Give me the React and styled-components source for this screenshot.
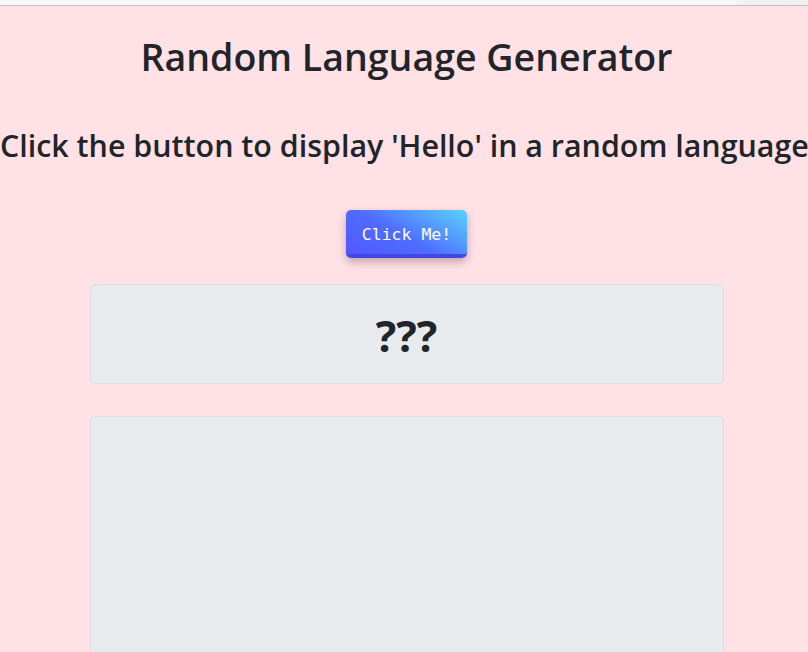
import React from "react";
import styled, { createGlobalStyle } from "styled-components";

const Global = createGlobalStyle`
  html, body { margin: 0; padding: 0; }
  body {
    background: #ffe1e6;
    color: #212529;
    font-family: "Open Sans", "Noto Sans", sans-serif;
    overflow: hidden;
    height: 652px;
  }
`;

const TopStrip = styled.div`
  height: 5px;
  background: linear-gradient(90deg, #f7f7f7 0, #f7f7f7 735px, #efefef 745px, #f0f0f0 100%);
  border-bottom: 1px solid #bfbfbf;
`;

const Page = styled.main`
  width: 813px;
  display: flex;
  flex-direction: column;
  align-items: center;
`;

const Title = styled.h1`
  margin: 28px 0 0;
  font-size: 37.5px;
  font-weight: 600;
  line-height: 45px;
  white-space: nowrap;
`;

const Subtitle = styled.h2`
  align-self: flex-start;
  margin: 49px 0 0;
  font-size: 30.4px;
  font-weight: 600;
  line-height: 36px;
  white-space: nowrap;
`;

const Button = styled.button`
  margin-top: 46px;
  width: 121px;
  height: 48px;
  border: none;
  border-bottom: 4px solid #4349df;
  border-radius: 5px;
  background: linear-gradient(30deg, #5158ff 0%, #4f6dff 45%, #5ad3ff 100%);
  color: #fff;
  font-family: "DejaVu Sans Mono", "Liberation Mono", monospace;
  font-size: 16.5px;
  padding: 4px 0 0;
  box-shadow: 0 4px 8px rgba(80, 50, 70, 0.35);
  cursor: pointer;
`;

const Panel = styled.section`
  box-sizing: border-box;
  width: 634px;
  height: ${(p) => p.$h}px;
  margin-top: ${(p) => p.$mt}px;
  background: #e8ebee;
  border: 1px solid #dcdfe3;
  border-radius: 5px;
  display: flex;
  align-items: center;
  justify-content: center;
`;

const Result = styled.div`
  font-size: 43px;
  font-weight: 700;
  line-height: 1;
  margin-top: 2px;
`;

export default function App() {
  return (
    <>
      <Global />
      <TopStrip />
      <Page>
        <Title>Random Language Generator</Title>
        <Subtitle>Click the button to display 'Hello' in a random language</Subtitle>
        <Button>Click Me!</Button>
        <Panel $h={100} $mt={26}>
          <Result>???</Result>
        </Panel>
        <Panel $h={260} $mt={32} />
      </Page>
    </>
  );
}
